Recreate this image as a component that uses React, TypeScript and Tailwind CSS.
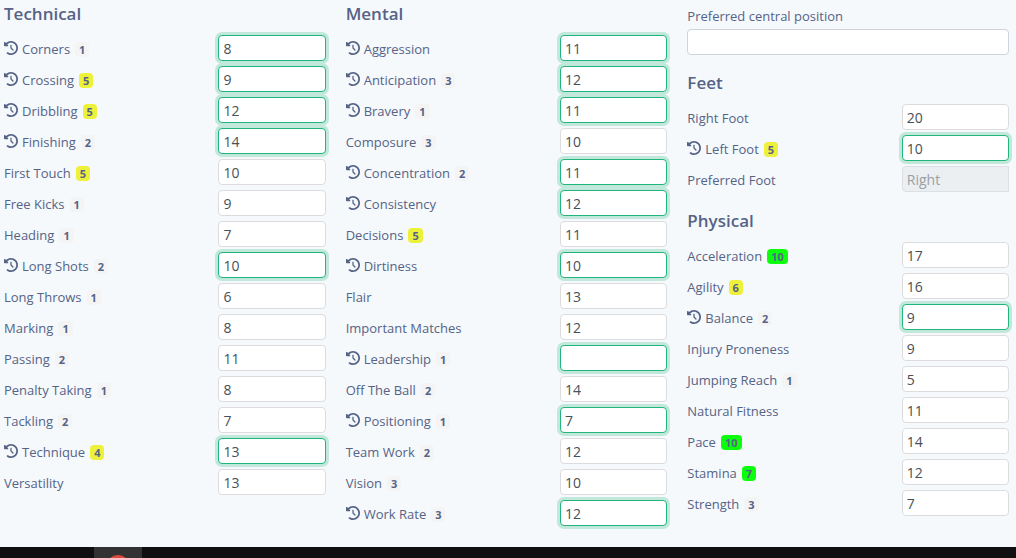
import { useId } from 'react';
import { FaClockRotateLeft } from 'react-icons/fa6';

type Tone = 'grey' | 'yellow' | 'green';

interface Attribute {
  name: string;
  value: string;
  changed?: boolean;
  badge?: number;
  disabled?: boolean;
}

const technical: Attribute[] = [
  { name: 'Corners', value: '8', changed: true, badge: 1 },
  { name: 'Crossing', value: '9', changed: true, badge: 5 },
  { name: 'Dribbling', value: '12', changed: true, badge: 5 },
  { name: 'Finishing', value: '14', changed: true, badge: 2 },
  { name: 'First Touch', value: '10', badge: 5 },
  { name: 'Free Kicks', value: '9', badge: 1 },
  { name: 'Heading', value: '7', badge: 1 },
  { name: 'Long Shots', value: '10', changed: true, badge: 2 },
  { name: 'Long Throws', value: '6', badge: 1 },
  { name: 'Marking', value: '8', badge: 1 },
  { name: 'Passing', value: '11', badge: 2 },
  { name: 'Penalty Taking', value: '8', badge: 1 },
  { name: 'Tackling', value: '7', badge: 2 },
  { name: 'Technique', value: '13', changed: true, badge: 4 },
  { name: 'Versatility', value: '13' },
];

const mental: Attribute[] = [
  { name: 'Aggression', value: '11', changed: true },
  { name: 'Anticipation', value: '12', changed: true, badge: 3 },
  { name: 'Bravery', value: '11', changed: true, badge: 1 },
  { name: 'Composure', value: '10', badge: 3 },
  { name: 'Concentration', value: '11', changed: true, badge: 2 },
  { name: 'Consistency', value: '12', changed: true },
  { name: 'Decisions', value: '11', badge: 5 },
  { name: 'Dirtiness', value: '10', changed: true },
  { name: 'Flair', value: '13' },
  { name: 'Important Matches', value: '12' },
  { name: 'Leadership', value: '', changed: true, badge: 1 },
  { name: 'Off The Ball', value: '14', badge: 2 },
  { name: 'Positioning', value: '7', changed: true, badge: 1 },
  { name: 'Team Work', value: '12', badge: 2 },
  { name: 'Vision', value: '10', badge: 3 },
  { name: 'Work Rate', value: '12', changed: true, badge: 3 },
];

const feet: Attribute[] = [
  { name: 'Right Foot', value: '20' },
  { name: 'Left Foot', value: '10', changed: true, badge: 5 },
  { name: 'Preferred Foot', value: 'Right', disabled: true },
];

const physical: Attribute[] = [
  { name: 'Acceleration', value: '17', badge: 10 },
  { name: 'Agility', value: '16', badge: 6 },
  { name: 'Balance', value: '9', changed: true, badge: 2 },
  { name: 'Injury Proneness', value: '9' },
  { name: 'Jumping Reach', value: '5', badge: 1 },
  { name: 'Natural Fitness', value: '11' },
  { name: 'Pace', value: '14', badge: 10 },
  { name: 'Stamina', value: '12', badge: 7 },
  { name: 'Strength', value: '7', badge: 3 },
];

const badgeTones: Record<Tone, string> = {
  grey: 'bg-[#f4f4f5]',
  yellow: 'bg-[#eef139]',
  green: 'bg-[#0cff0c]',
};

function toneFor(count: number): Tone {
  if (count >= 7) return 'green';
  return count >= 4 ? 'yellow' : 'grey';
}

function fieldStyle({ changed, disabled }: Attribute) {
  if (changed) return 'rounded border-[#20b57d] bg-white text-[#495057] ring-3 ring-[#c1e8db]';
  if (disabled) return 'rounded-l border-[#dcdfe3] bg-[#ebeff2] text-[#9a9fa5]';
  return 'rounded border-[#dcdcdf] bg-white text-[#495057]';
}

function AttributeRow({ item }: { item: Attribute }) {
  const id = useId();
  return (
    <div className="grid grid-cols-3 items-center">
      <label htmlFor={id} className="col-span-2 flex items-center pt-0.5 leading-6">
        {item.changed && <FaClockRotateLeft className="mr-1 mb-0.5 size-3.5 shrink-0" aria-hidden="true" />}
        <span>{item.name}</span>
        {item.badge !== undefined && (
          <span
            className={`ml-[5px] mt-px h-[15px] rounded px-1 text-[11px] leading-[15px] font-bold ${badgeTones[toneFor(item.badge)]}`}
          >
            {item.badge}
          </span>
        )}
      </label>
      <input
        id={id}
        type="text"
        defaultValue={item.value}
        disabled={item.disabled}
        className={`h-[26px] w-full min-w-0 border px-1 text-sm outline-none ${fieldStyle(item)}`}
      />
    </div>
  );
}

function AttributeGroup({ title, items }: { title: string; items: Attribute[] }) {
  return (
    <section>
      <h2 className="mb-2 text-[17px] leading-[27px] font-semibold">{title}</h2>
      <div className="flex flex-col gap-[5px]">
        {items.map((item) => (
          <AttributeRow key={item.name} item={item} />
        ))}
      </div>
    </section>
  );
}

export default function App() {
  return (
    <div className="flex min-h-screen flex-col bg-[#f5f9fc] font-['Open_Sans','Noto_Sans',sans-serif] text-[13px] text-[#566386]">
      <main className="grid flex-1 grid-cols-3 items-start gap-5 pr-[7px] pl-1">
        <AttributeGroup title="Technical" items={technical} />
        <AttributeGroup title="Mental" items={mental} />
        <div className="flex flex-col gap-3.5">
          <div className="pt-1">
            <label htmlFor="central-position" className="block leading-[25px]">
              Preferred central position
            </label>
            <input
              id="central-position"
              type="text"
              className="block h-[26px] w-full rounded border border-[#ced4da] bg-white px-1 text-sm text-[#495057] outline-none"
            />
          </div>
          <div className="flex flex-col gap-[15px]">
            <AttributeGroup title="Feet" items={feet} />
            <AttributeGroup title="Physical" items={physical} />
          </div>
        </div>
      </main>
      <footer className="flex h-[11px] overflow-hidden bg-[#101010] pl-[94px]">
        <div className="flex w-12 justify-center bg-[#333333] pt-2">
          <svg viewBox="0 0 24 24" className="size-6 shrink-0" aria-hidden="true">
            <circle cx="12" cy="12" r="12" fill="#dd4b3e" />
          </svg>
        </div>
      </footer>
    </div>
  );
}
